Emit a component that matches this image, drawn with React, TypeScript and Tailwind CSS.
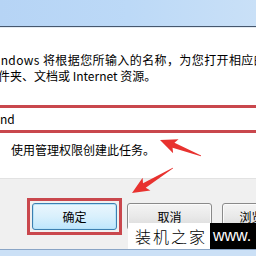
import React from "react";

function Arrow({ x, y, angle, len }: { x: number; y: number; angle: number; len: number }) {
  const pts = `0,0 17,-7.5 14.5,-2.6 ${len},-0.4 ${len},0.4 14.5,2.6 17,7.5`;
  return (
    <polygon
      points={pts}
      fill="#e8322f"
      transform={`translate(${x} ${y}) rotate(${angle})`}
    />
  );
}

function Btn({ label, primary }: { label: string; primary?: boolean }) {
  return (
    <div
      className={
        primary
          ? "w-[85px] h-[27px] rounded-[3px] border border-[#3c7fb1] bg-gradient-to-b from-[#eaf6fd] via-[#d9f0fc] to-[#bee6fd] flex items-center justify-center shadow-[inset_0_0_0_1px_#b8e3f8]"
          : "w-[85px] h-[27px] rounded-[3px] border border-[#8a8a8a] bg-gradient-to-b from-[#f4f4f4] via-[#e9e9e9] to-[#d9d9d9] flex items-center justify-center shadow-[inset_0_0_0_1px_#fbfbfb]"
      }
    >
      <span className="text-[12px] text-black leading-none whitespace-nowrap">{label}</span>
    </div>
  );
}

export default function App() {
  return (
    <div className="relative w-[256px] h-[256px] overflow-hidden bg-white text-black font-['Noto_Sans_CJK_SC','Noto_Sans',sans-serif] text-[12px]">
      <div className="h-[26px] bg-gradient-to-r from-[#b6d4f5] via-[#bcd9f7] to-[#c9e0f7]" />
      <div className="h-px bg-[#46576d]" />
      <div className="h-px bg-[#e4ebf2]" />
      <div className="h-[150px] flex flex-col">
        <div className="pt-[24px] leading-[16px] whitespace-nowrap ml-[-14px]">
          <div className="tracking-[0.4px]">Windows 将根据您所输入的名称，为您打开相应的程序、</div>
          <div>文件夹、文档或 Internet 资源。</div>
        </div>
        <div className="mt-[21px] h-[28px] border-y-[3px] border-[#c9474d] flex items-center whitespace-nowrap">
          <span className="leading-[22px]">nd</span>
        </div>
        <div className="mt-[9px] pl-[11px] leading-[16px] whitespace-nowrap">使用管理权限创建此任务。</div>
      </div>
      <div className="h-[71px] bg-[#f0f0f0] border-t border-[#e2e2e2] flex items-start pt-[19px]">
        <div className="ml-[27px] border-[3px] border-[#c9474d] p-[2px] shrink-0">
          <Btn label="确定" primary />
        </div>
        <div className="ml-[5px] mt-[5px] shrink-0">
          <Btn label="取消" />
        </div>
        <div className="ml-[10px] mt-[5px] shrink-0">
          <Btn label="浏览(B)..." />
        </div>
      </div>
      <div className="h-px bg-[#8aa5c6]" />
      <div className="h-[8px] bg-[#cbe0f6]" />

      <div className="absolute left-[128px] top-[223px] h-[26px] flex">
        <div className="w-[82px] h-full bg-white flex items-center pl-[7px] text-[16px] tracking-[2px] whitespace-nowrap text-black font-light leading-none">
          装机之家
        </div>
        <div className="w-[46px] h-full bg-black flex items-center pl-[3px] text-white text-[16px] whitespace-nowrap font-['Liberation_Sans',sans-serif] leading-none">
          www.
        </div>
      </div>

      <svg className="absolute left-0 top-0 pointer-events-none" width="256" height="256" viewBox="0 0 256 256">
        <Arrow x={160} y={140} angle={21.3} len={44} />
        <Arrow x={132} y={193} angle={-31.4} len={48} />
      </svg>
    </div>
  );
}
